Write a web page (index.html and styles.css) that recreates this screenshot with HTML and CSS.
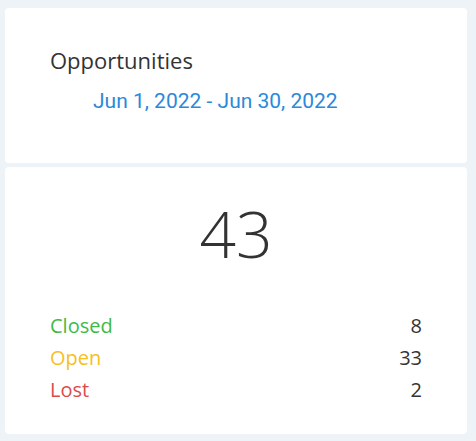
FILE: index.html
```html
<!DOCTYPE html>
<html lang="en">

<head>
    <meta charset="UTF-8">
    <meta name="viewport" content="width=device-width, initial-scale=1.0">
    <title>Opportunities</title>
    <link rel="stylesheet" href="styles.css">
</head>

<body>
    <div class="widget">
        <div class="card head-card">
            <h3 class="title">Opportunities</h3>
            <p class="range">Jun 1, 2022 - Jun 30, 2022</p>
        </div>
        <div class="card body-card">
            <div class="total">43</div>
            <ul class="stats">
                <li><span class="closed">Closed</span><span>8</span></li>
                <li><span class="open">Open</span><span>33</span></li>
                <li><span class="lost">Lost</span><span>2</span></li>
            </ul>
        </div>
    </div>
</body>

</html>
```

FILE: styles.css
```css
* {
    margin: 0;
    padding: 0;
    box-sizing: border-box;
}

body {
    background-color: #eef3f7;
    font-family: "Open Sans", "Noto Sans", sans-serif;
    color: #333;
    padding: 8px 9px 7px 5px;
}

.widget {
    display: flex;
    flex-direction: column;
    gap: 3px;
}

.card {
    background-color: white;
    border-radius: 4px;
    padding: 0 45px;
}

.head-card {
    height: 156px;
    padding-top: 37px;
    border-bottom: 1px solid #f0f2f4;
}

.title {
    font-weight: 400;
    font-size: 22px;
    line-height: 30px;
}

.range {
    font-family: Roboto, sans-serif;
    color: #2a8ad9;
    font-size: 21px;
    line-height: 24px;
    margin-top: 14px;
    padding-left: 43px;
}

.body-card {
    height: 267px;
    padding-top: 22px;
}

.total {
    text-align: center;
    font-size: 64px;
    font-weight: 300;
    line-height: 90px;
}

.stats {
    list-style: none;
    margin-top: 31px;
    font-size: 20px;
}

.stats li {
    display: flex;
    justify-content: space-between;
    line-height: 32px;
}

.closed {
    color: #3dbb45;
}

.open {
    color: #f7c01e;
}

.lost {
    color: #dc4b4b;
}
```
